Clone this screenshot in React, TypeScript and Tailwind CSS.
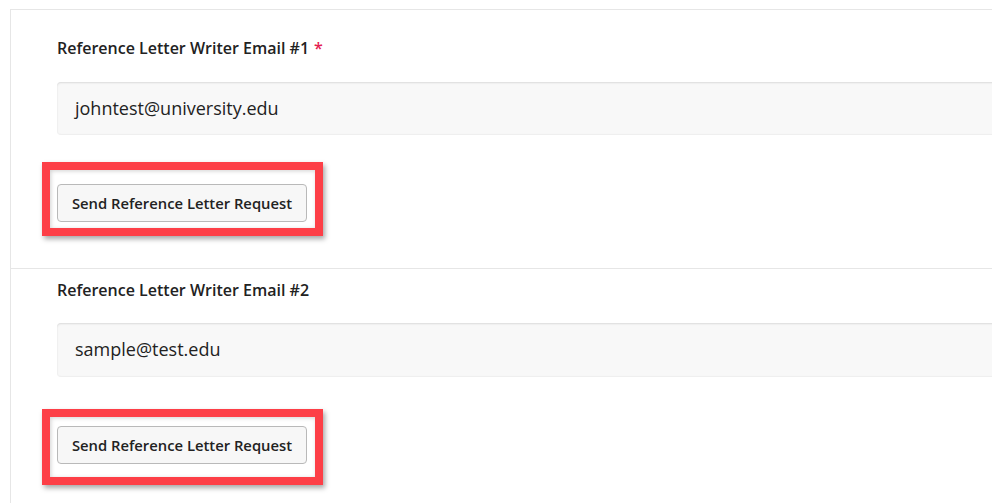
import React from "react";

function Field({ label, value, required, first }: { label: string; value: string; required?: boolean; first?: boolean }) {
  return (
    <div className={first ? "pl-[46px] pt-[28px] pb-[46px]" : "pl-[46px] pt-[11px] pb-[46px]"}>
      <div className="text-[16px] leading-[20px] font-semibold text-[#222]">
        {label}
        {required && <span className="ml-[5px] text-[#e4204f]">*</span>}
      </div>
      <div
        className={
          (first ? "mt-[24px] h-[53px]" : "mt-[23px] h-[54px]") +
          " -mr-[20px] flex items-center rounded-[4px] bg-[#f8f8f8] pl-[18px] text-[18px] text-[#222] shadow-[inset_0_1px_2px_rgba(0,0,0,0.12)] border-b border-[#efefef]"
        }
      >
        {value}
      </div>
      <div className={first ? "mt-[49px] flex" : "mt-[49px] flex"}>
        <div className="relative">
          <button className="h-[38px] w-[250px] rounded-[4px] border border-[#b9b9b9] bg-[#f7f7f7] text-[14.8px] font-semibold text-[#222]">
            Send Reference Letter Request
          </button>
          <div
            className={
              (first ? "-top-[22px] -bottom-[14px]" : "-top-[17px] -bottom-[21px]") +
              " pointer-events-none absolute -left-[15px] -right-[16px] border-[8px] border-[#fd3f47] shadow-[2px_3px_5px_rgba(0,0,0,0.35),inset_1px_1px_4px_rgba(0,0,0,0.18)]"
            }
          />
        </div>
      </div>
    </div>
  );
}

export default function App() {
  return (
    <div className="h-[503px] w-[992px] overflow-hidden bg-white pl-[10px] pt-[9px] font-['Open_Sans',sans-serif]">
      <div className="h-full border-l border-t border-[#e6e6e6]">
        <Field label="Reference Letter Writer Email #1" value="johntest@university.edu" required first />
        <div className="border-t border-[#e6e6e6]">
          <Field label="Reference Letter Writer Email #2" value="sample@test.edu" />
        </div>
      </div>
    </div>
  );
}
